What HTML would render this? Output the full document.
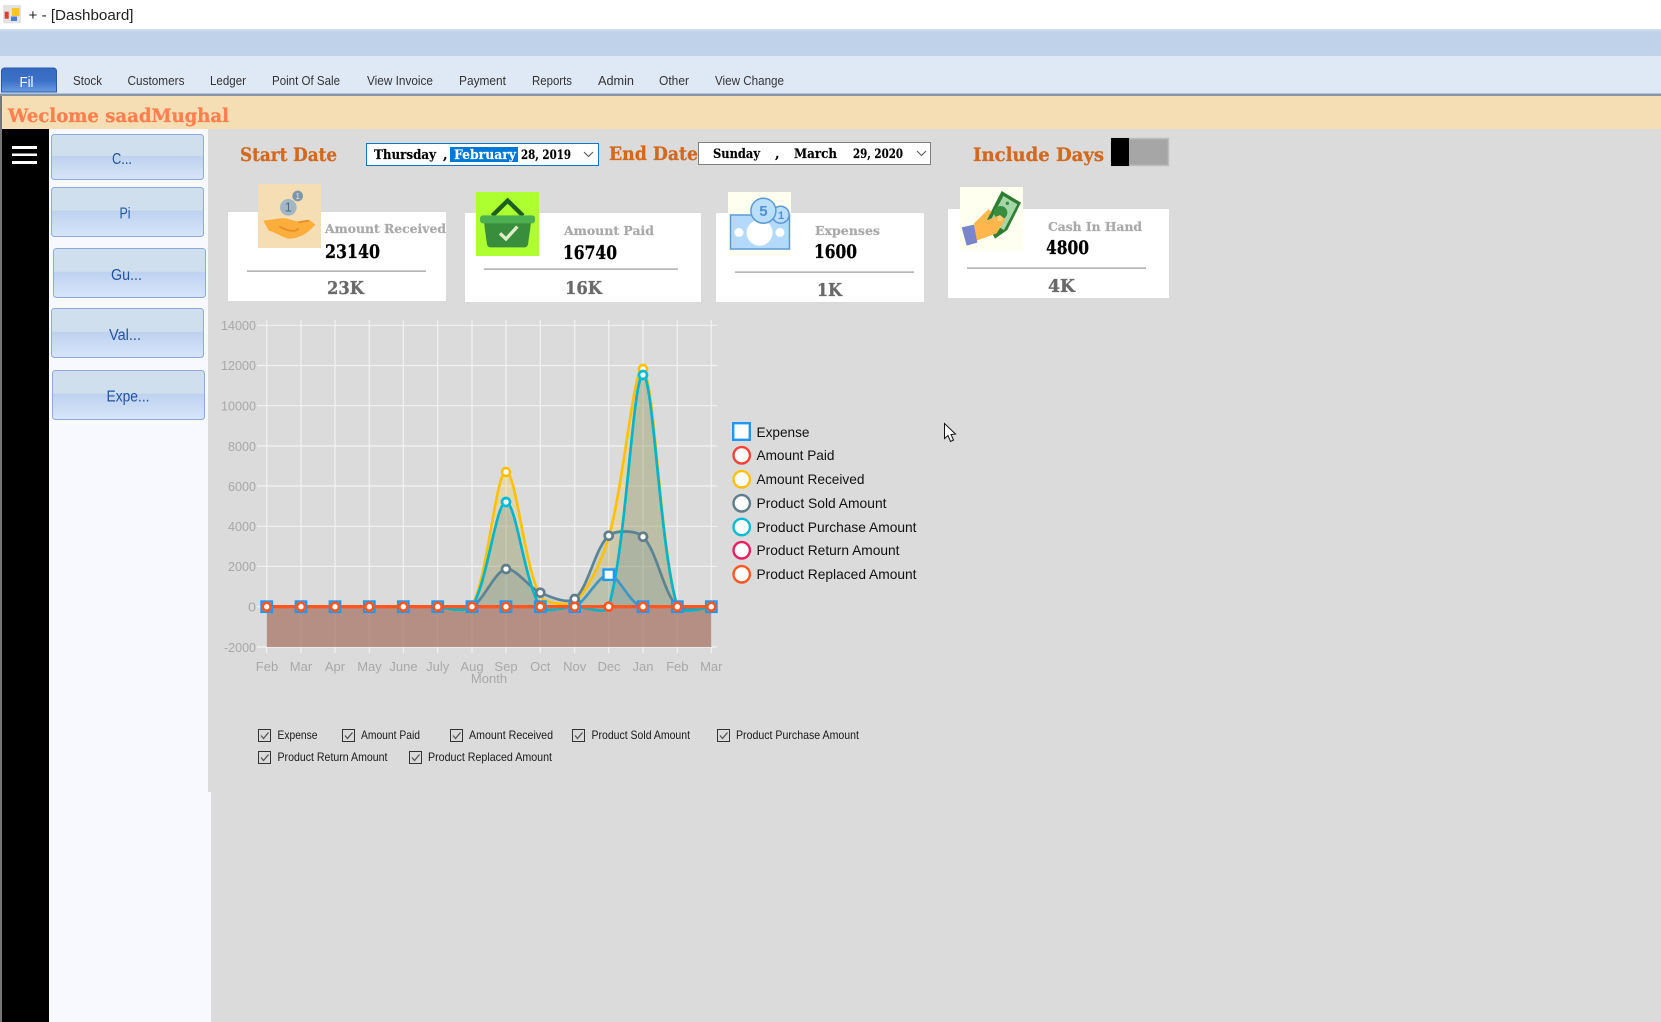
<!DOCTYPE html>
<html lang="en"><head><meta charset="utf-8"><title>Dashboard</title>
<style>
html,body{margin:0;padding:0;width:1661px;height:1022px;overflow:hidden;background:#dbdbdb}
svg{display:block}
text{font-family:"Liberation Sans",Arial,sans-serif;white-space:pre}
.slab{font-family:"DejaVu Serif","Liberation Serif",serif;font-weight:700}
.h{font-size:19px;fill:#d2691e;stroke:#d2691e;stroke-width:.3}
.p{font-size:13px;fill:#000;stroke:#000;stroke-width:.15}
.lab{font-size:12.5px;fill:#a9a9a9;stroke:#a9a9a9;stroke-width:.2}
.num{font-size:19px;fill:#000;stroke:#000;stroke-width:.3}
.k{font-size:17.5px;fill:#696969;stroke:#696969;stroke-width:.3}
.m{font-size:13px;fill:#333}
.b{font-size:15.5px;fill:#22539f}
.ax{font-size:13.3px;fill:#a8a8a8}
.mo{font-size:13px;fill:#a8a8a8;text-anchor:middle}
.lg{font-size:14px;fill:#111}
.cb{font-size:12px;fill:#1a1a1a}
.g line{stroke:#f2f2f2;stroke-width:1.2}
.sq rect{fill:#fff;stroke:#2196f3;stroke-width:2.4}
.oc circle{fill:#fff;stroke:#ff5722;stroke-width:2.7}
.gc circle{fill:#fff;stroke:#607d8b;stroke-width:2.7}
.box rect{fill:none;stroke:#333;stroke-width:1}
.box path{fill:none;stroke:#555;stroke-width:1.3}
</style></head><body>
<svg xmlns="http://www.w3.org/2000/svg" width="1661" height="1022" viewBox="0 0 1661 1022">
<defs>
<linearGradient id="btn" x1="0" y1="0" x2="0" y2="1">
<stop offset="0" stop-color="#cfdfee"/><stop offset=".47" stop-color="#cfdfee"/><stop offset=".48" stop-color="#bdd2f0"/><stop offset="1" stop-color="#d7e5f9"/></linearGradient>
<linearGradient id="fil" x1="0" y1="0" x2="0" y2="1">
<stop offset="0" stop-color="#3569bf"/><stop offset=".55" stop-color="#3c72c8"/><stop offset="1" stop-color="#6a9ce0"/></linearGradient>
<linearGradient id="band" x1="0" y1="0" x2="0" y2="1">
<stop offset="0" stop-color="#d3e0f1"/><stop offset=".12" stop-color="#bfd2ea"/><stop offset="1" stop-color="#c1d3ea"/></linearGradient>
</defs>

<!-- window chrome -->
<rect width="1661" height="29" fill="#fff"/>
<rect x="3" y="5" width="18" height="18" fill="#e2e2e2"/>
<rect x="12" y="8" width="7.500" height="8" fill="#f6c42c"/>
<rect x="4.700" y="11.700" width="4" height="7" fill="#d8402f"/>
<rect x="11" y="16.500" width="6" height="4.500" fill="#4d7fd0"/>
<text x="28.500" y="20" font-size="14.500" fill="#222" textLength="105" lengthAdjust="spacingAndGlyphs">+ - [Dashboard]</text>
<rect y="29" width="1661" height="27" fill="url(#band)"/>
<rect y="56" width="1661" height="38" fill="#dfe9f6"/>
<rect y="93" width="1661" height="1" fill="#b5c3d3"/>
<rect y="94" width="1661" height="2" fill="#8496a8"/>

<!-- ribbon tabs -->
<path d="M1.500 92V71a3 3 0 0 1 3-3h49a3 3 0 0 1 3 3v21z" fill="url(#fil)" stroke="#2a5cab"/>
<text x="19.500" y="87" font-size="15" fill="#fff" textLength="14" lengthAdjust="spacingAndGlyphs">Fil</text>
<text class="m" x="73" y="85" textLength="29" lengthAdjust="spacingAndGlyphs">Stock</text>
<text class="m" x="127.500" y="85" textLength="57" lengthAdjust="spacingAndGlyphs">Customers</text>
<text class="m" x="210" y="85" textLength="36" lengthAdjust="spacingAndGlyphs">Ledger</text>
<text class="m" x="272" y="85" textLength="68" lengthAdjust="spacingAndGlyphs">Point Of Sale</text>
<text class="m" x="367" y="85" textLength="66" lengthAdjust="spacingAndGlyphs">View Invoice</text>
<text class="m" x="459" y="85" textLength="47" lengthAdjust="spacingAndGlyphs">Payment</text>
<text class="m" x="532" y="85" textLength="40" lengthAdjust="spacingAndGlyphs">Reports</text>
<text class="m" x="598" y="85" textLength="36" lengthAdjust="spacingAndGlyphs">Admin</text>
<text class="m" x="659" y="85" textLength="30" lengthAdjust="spacingAndGlyphs">Other</text>
<text class="m" x="715" y="85" textLength="69" lengthAdjust="spacingAndGlyphs">View Change</text>

<!-- welcome bar -->
<rect y="96" width="1661" height="33" fill="#f5deb3"/>
<rect y="96" width="2" height="926" fill="#777"/>
<text class="slab" x="8" y="122" font-size="19" fill="#ff7f50" stroke="#ff7f50" stroke-width=".3" textLength="221" lengthAdjust="spacingAndGlyphs">Weclome saadMughal</text>

<!-- side -->
<rect x="2" y="129" width="47" height="893" fill="#000"/>
<rect x="49" y="129" width="159" height="663" fill="#f8f9fe"/>
<rect x="49" y="792" width="162" height="230" fill="#f8f9fe"/>
<rect x="12" y="146" width="25" height="3" fill="#fff"/>
<rect x="12" y="153.500" width="25" height="2.500" fill="#fff"/>
<rect x="12" y="161" width="25" height="3" fill="#fff"/>

<g fill="url(#btn)" stroke="#8dabd9">
<rect x="51.500" y="134.500" width="152" height="45" rx="3"/>
<rect x="51.500" y="187.500" width="152" height="49" rx="3"/>
<rect x="53.500" y="248.500" width="152" height="49" rx="3"/>
<rect x="51.500" y="308.500" width="152" height="49" rx="3"/>
<rect x="52.500" y="370.500" width="152" height="49" rx="3"/>
</g>
<text class="b" x="112" y="164" textLength="20" lengthAdjust="spacingAndGlyphs">C...</text>
<text class="b" x="119.500" y="218.500" textLength="11" lengthAdjust="spacingAndGlyphs">Pi</text>
<text class="b" x="111" y="280" textLength="31" lengthAdjust="spacingAndGlyphs">Gu...</text>
<text class="b" x="109" y="340" textLength="32" lengthAdjust="spacingAndGlyphs">Val...</text>
<text class="b" x="106.500" y="401.500" textLength="43" lengthAdjust="spacingAndGlyphs">Expe...</text>

<!-- date header -->
<text class="slab h" x="240" y="161" textLength="97" lengthAdjust="spacingAndGlyphs">Start Date</text>
<rect x="366.500" y="143.500" width="232" height="22" fill="#fff" stroke="#0a78d4"/>
<rect x="450" y="147" width="68" height="15" fill="#0078d7"/>
<text class="slab p" x="374" y="159" textLength="62" lengthAdjust="spacingAndGlyphs">Thursday</text>
<text class="slab p" x="443" y="159">,</text>
<text class="slab p" x="454" y="159" style="fill:#fff;stroke:#fff" textLength="62" lengthAdjust="spacingAndGlyphs">February</text>
<text class="slab p" x="521" y="159" textLength="50" lengthAdjust="spacingAndGlyphs">28, 2019</text>
<path d="M584 152l4.500 4.500 4.500-4.500" fill="none" stroke="#555"/>

<text class="slab h" x="609" y="160" textLength="89" lengthAdjust="spacingAndGlyphs">End Date</text>
<rect x="698.500" y="142.500" width="232" height="22" fill="#fff" stroke="#7f7f7f"/>
<text class="slab p" x="713" y="158" textLength="47" lengthAdjust="spacingAndGlyphs">Sunday</text>
<text class="slab p" x="775" y="158">,</text>
<text class="slab p" x="794" y="158" textLength="43" lengthAdjust="spacingAndGlyphs">March</text>
<text class="slab p" x="853" y="158" textLength="50" lengthAdjust="spacingAndGlyphs">29, 2020</text>
<path d="M917 151l4.500 4.500 4.500-4.500" fill="none" stroke="#555"/>

<text class="slab h" x="973" y="161" textLength="131" lengthAdjust="spacingAndGlyphs">Include Days</text>
<rect x="1111.500" y="138.500" width="57" height="27" fill="#a6a6a6" stroke="#bdbdbd" stroke-width="1.500"/>
<rect x="1111" y="138" width="18" height="28" fill="#000"/>

<!-- card 1 -->
<rect x="228" y="212" width="218" height="89" fill="#fff"/>
<rect x="258" y="184" width="63" height="64" fill="#f5deb3"/>
<g transform="translate(230 180) scale(.33333)">
<circle cx="175" cy="82" r="25" fill="#a3b6c6"/>
<circle cx="203" cy="48" r="16" fill="#7d97a9"/>
<text x="175" y="95" font-size="38" fill="#4f6b7e" text-anchor="middle">1</text>
<text x="203" y="57" font-size="24" fill="#dfe6ea" text-anchor="middle">1</text>
<path d="M100 122L150 115C172 112 190 124 205 124L238 120L256 134C240 152 218 174 180 176C160 176 140 158 116 152Z" fill="#fbae3c"/>
<path d="M148 139C170 152 195 158 206 146M205 127L236 122" fill="none" stroke="#e8902a" stroke-width="6"/>
</g>
<text class="slab lab" x="325" y="233" textLength="121" lengthAdjust="spacingAndGlyphs">Amount Received</text>
<text class="slab num" x="325" y="258" textLength="55" lengthAdjust="spacingAndGlyphs">23140</text>
<rect x="247" y="270.500" width="179" height="1.200" fill="#999"/>
<text class="slab k" x="327" y="294" textLength="37" lengthAdjust="spacingAndGlyphs">23K</text>

<!-- card 2 -->
<rect x="465" y="213" width="236" height="89" fill="#fff"/>
<rect x="476" y="192" width="63" height="64" fill="#adff2f"/>
<g transform="translate(460 180) scale(.33333)">
<path d="M97 107L143 62L189 107" fill="none" stroke="#1b5e20" stroke-width="13"/>
<path d="M72 128H213L204 193Q202 202 192 202H93Q83 202 81 193Z" fill="#388e3c"/>
<rect x="60" y="106" width="165" height="24" rx="9" fill="#4caf50"/>
<path d="M120 160L138 177L172 140" fill="none" stroke="#dcedc8" stroke-width="10"/>
</g>
<text class="slab lab" x="564" y="235" textLength="90" lengthAdjust="spacingAndGlyphs">Amount Paid</text>
<text class="slab num" x="563" y="259" textLength="54" lengthAdjust="spacingAndGlyphs">16740</text>
<rect x="484" y="268.500" width="194" height="1.200" fill="#999"/>
<text class="slab k" x="565" y="294" textLength="37" lengthAdjust="spacingAndGlyphs">16K</text>

<!-- card 3 -->
<rect x="716" y="213" width="208" height="89" fill="#fff"/>
<rect x="728" y="192" width="63" height="64" fill="#fffff0"/>
<rect x="730.500" y="215" width="59" height="34" fill="#b3d9fb" stroke="#5b9bd5" stroke-width="1.500"/>
<ellipse cx="759.600" cy="232.700" rx="13" ry="13" fill="#fff"/>
<circle cx="739" cy="232.500" r="4.500" fill="#fff"/>
<circle cx="780" cy="232.500" r="4.500" fill="#fff"/>
<circle cx="780.600" cy="214.700" r="8.500" fill="#bbdefb" stroke="#5b9bd5" stroke-width="1.500"/>
<circle cx="763.400" cy="210.700" r="12.500" fill="#bbdefb" stroke="#5b9bd5" stroke-width="1.500"/>
<text x="763.400" y="216" font-size="15" font-weight="700" fill="#4f8fd0" text-anchor="middle">5</text>
<text x="781" y="219" font-size="11" font-weight="700" fill="#4f8fd0" text-anchor="middle">1</text>
<text class="slab lab" x="815" y="235" textLength="65" lengthAdjust="spacingAndGlyphs">Expenses</text>
<text class="slab num" x="814" y="258" textLength="43" lengthAdjust="spacingAndGlyphs">1600</text>
<rect x="735" y="271.500" width="179" height="1.200" fill="#999"/>
<text class="slab k" x="817" y="296" textLength="25" lengthAdjust="spacingAndGlyphs">1K</text>

<!-- card 4 -->
<rect x="948" y="209" width="221" height="89" fill="#fff"/>
<rect x="960" y="187" width="63" height="64" fill="#fffff0"/>
<g transform="translate(950 180) scale(.33333)">
<path d="M155 33L213 68L172 150L135 176L108 125Z" fill="#2e7d32"/>
<path d="M160 48L202 73L162 150L120 125Z" fill="#a5d6a7"/>
<circle cx="152" cy="98" r="20" fill="#388e3c"/>
<circle cx="172" cy="70" r="5" fill="#388e3c"/>
<path d="M72 130L115 88L125 95L108 122L150 105L166 118L140 160L80 182Z" fill="#ffb74d"/>
<circle cx="150" cy="116" r="8" fill="#ffcc80"/>
<path d="M35 142L72 134L82 188L50 197Z" fill="#7986cb"/>
</g>
<text class="slab lab" x="1048" y="231" textLength="94" lengthAdjust="spacingAndGlyphs">Cash In Hand</text>
<text class="slab num" x="1046" y="254" textLength="43" lengthAdjust="spacingAndGlyphs">4800</text>
<rect x="967" y="267.500" width="179" height="1.200" fill="#999"/>
<text class="slab k" x="1048" y="292" textLength="27" lengthAdjust="spacingAndGlyphs">4K</text>

<!-- chart grid -->
<g class="g">
<line x1="257" x2="717" y1="325.300" y2="325.300"/><line x1="257" x2="717" y1="365.500" y2="365.500"/><line x1="257" x2="717" y1="405.700" y2="405.700"/><line x1="257" x2="717" y1="446" y2="446"/><line x1="257" x2="717" y1="486" y2="486"/><line x1="257" x2="717" y1="526.300" y2="526.300"/><line x1="257" x2="717" y1="566.400" y2="566.400"/><line x1="257" x2="717" y1="606.700" y2="606.700"/><line x1="257" x2="717" y1="647" y2="647"/>
<line y1="320" y2="653" x1="266.700" x2="266.700"/><line y1="320" y2="653" x1="301" x2="301"/><line y1="320" y2="653" x1="335" x2="335"/><line y1="320" y2="653" x1="369.300" x2="369.300"/><line y1="320" y2="653" x1="403.300" x2="403.300"/><line y1="320" y2="653" x1="437.700" x2="437.700"/><line y1="320" y2="653" x1="472" x2="472"/><line y1="320" y2="653" x1="506" x2="506"/><line y1="320" y2="653" x1="540.300" x2="540.300"/><line y1="320" y2="653" x1="574.700" x2="574.700"/><line y1="320" y2="653" x1="608.700" x2="608.700"/><line y1="320" y2="653" x1="643" x2="643"/><line y1="320" y2="653" x1="677.300" x2="677.300"/><line y1="320" y2="653" x1="711.300" x2="711.300"/>
</g>
<g class="ax">
<text x="221" y="330" textLength="35" lengthAdjust="spacingAndGlyphs">14000</text>
<text x="221" y="370" textLength="35" lengthAdjust="spacingAndGlyphs">12000</text>
<text x="221" y="410.500" textLength="35" lengthAdjust="spacingAndGlyphs">10000</text>
<text x="228" y="451" textLength="28" lengthAdjust="spacingAndGlyphs">8000</text>
<text x="228" y="491" textLength="28" lengthAdjust="spacingAndGlyphs">6000</text>
<text x="228" y="531" textLength="28" lengthAdjust="spacingAndGlyphs">4000</text>
<text x="228" y="571" textLength="28" lengthAdjust="spacingAndGlyphs">2000</text>
<text x="248" y="611.500" textLength="8" lengthAdjust="spacingAndGlyphs">0</text>
<text x="224" y="652" textLength="32" lengthAdjust="spacingAndGlyphs">-2000</text>
</g>
<g class="mo">
<text x="267" y="671">Feb</text><text x="301" y="671">Mar</text><text x="335" y="671">Apr</text><text x="369.500" y="671">May</text><text x="403.500" y="671">June</text><text x="437.700" y="671">July</text><text x="472" y="671">Aug</text><text x="506" y="671">Sep</text><text x="540.300" y="671">Oct</text><text x="574.700" y="671">Nov</text><text x="609" y="671">Dec</text><text x="643" y="671">Jan</text><text x="677.300" y="671">Feb</text><text x="711.300" y="671">Mar</text>
<text x="489" y="683">Month</text>
</g>

<!-- area fills -->
<path fill="#2196f3" fill-opacity=".15" d="M266.700 647V606.700H574.700C586.500 601.200 598.500 574.700 608.700 574.700C618.900 574.700 631.100 606.700 643 606.700H711.300V647Z"/>
<path fill="#f44336" fill-opacity=".15" d="M266.700 647V606.700H711.300V647Z"/>
<path fill="#ffc107" fill-opacity=".2" d="M266.700 647V606.700H437.700C437.700 606.700 467.900 614.700 472 606.700C488.400 574.300 495.500 473 506 472C516 471 524 566 540.300 596C545 604 568 606 574.700 602C588.600 590 602.700 558 608.700 537C623.200 488 634.400 360.600 643 369C654.900 380.600 659.400 544.200 677.300 606.700C679.800 615.500 711.300 606.700 711.300 606.700V647Z"/>
<path fill="#66898f" fill-opacity=".3" d="M266.700 647V606.700H437.700C437.700 606.700 467.100 614.200 472 606.700C487.600 582.800 495.800 502 506 502C516.200 502 524.600 582.800 540.300 606.700C545.200 614.200 564.400 606.700 574.700 606.700C585 606.700 606.100 615.500 608.700 606.700C626.600 546 632.700 375 643 375C653.300 375 659.400 546 677.300 606.700C679.900 615.500 711.300 606.700 711.300 606.700V647Z"/>
<path fill="#607d8b" fill-opacity=".15" d="M266.700 647V606.700H437.700C437.700 606.700 463.700 611.300 472 606.700C484.200 599.900 494.700 571.300 506 569C515.200 567.100 529.100 587.800 540.300 592.700C549.700 596.800 568 604.600 574.700 599C588.500 587.500 594.800 548.300 608.700 535.700C615.300 529.700 636.700 530.200 643 536.700C657.300 551.500 663 592 677.300 606.700C683.500 613 711.300 606.700 711.300 606.700V647Z"/>
<path fill="#e91e63" fill-opacity=".1" d="M266.700 647V606.700H711.300V647Z"/>
<path fill="#ff5722" fill-opacity=".12" d="M266.700 647V606.700H711.300V647Z"/>

<!-- lines -->
<g fill="none" stroke-width="2.700">
<path stroke="#ffc107" d="M437.700 606.700C437.700 606.700 467.900 614.700 472 606.700C488.400 574.300 495.500 473 506 472C516 471 524 566 540.300 596C545 604 568 606 574.700 602C588.600 590 602.700 558 608.700 537C623.200 488 634.400 360.600 643 369C654.900 380.600 659.400 544.200 677.300 606.700C679.800 615.500 711.300 606.700 711.300 606.700"/>
<path stroke="#3f97c4" d="M266.700 606.700H574.700C586.500 601.200 598.500 574.700 608.700 574.700C618.900 574.700 631.100 606.700 643 606.700H711.300"/>
<path stroke="#5a8496" d="M437.700 606.700C437.700 606.700 463.700 611.300 472 606.700C484.200 599.900 494.700 571.300 506 569C515.200 567.100 529.100 587.800 540.300 592.700C549.700 596.800 568 604.600 574.700 599C588.500 587.500 594.800 548.300 608.700 535.700C615.300 529.700 636.700 530.200 643 536.700C657.300 551.500 663 592 677.300 606.700C683.500 613 711.300 606.700 711.300 606.700"/>
<path stroke="#00b5cc" d="M437.700 606.700C437.700 606.700 467.100 614.200 472 606.700C487.600 582.800 495.800 502 506 502C516.200 502 524.600 582.800 540.300 606.700C545.200 614.200 564.400 606.700 574.700 606.700C585 606.700 606.100 615.500 608.700 606.700C626.600 546 632.700 375 643 375C653.300 375 659.400 546 677.300 606.700C679.900 615.500 711.300 606.700 711.300 606.700"/>
<path stroke="#ff5722" stroke-width="3.400" d="M266.700 606.700H711.300"/>
</g>

<!-- markers -->
<g class="sq">
<rect x="261.500" y="601.500" width="10.400" height="10.400"/><rect x="295.800" y="601.500" width="10.400" height="10.400"/><rect x="329.800" y="601.500" width="10.400" height="10.400"/><rect x="364.100" y="601.500" width="10.400" height="10.400"/><rect x="398.100" y="601.500" width="10.400" height="10.400"/><rect x="432.500" y="601.500" width="10.400" height="10.400"/><rect x="466.800" y="601.500" width="10.400" height="10.400"/><rect x="500.800" y="601.500" width="10.400" height="10.400"/><rect x="535.100" y="601.500" width="10.400" height="10.400"/><rect x="569.500" y="601.500" width="10.400" height="10.400"/><rect x="603.500" y="569.500" width="10.400" height="10.400"/><rect x="637.800" y="601.500" width="10.400" height="10.400"/><rect x="672.100" y="601.500" width="10.400" height="10.400"/><rect x="706.100" y="601.500" width="10.400" height="10.400"/>
</g>
<circle cx="506" cy="472" r="4" fill="#fff" stroke="#ffc107" stroke-width="2.700"/>
<circle cx="643" cy="369" r="4" fill="#fff" stroke="#ffc107" stroke-width="2.700"/>
<g class="gc">
<circle cx="506" cy="569" r="4"/><circle cx="540.300" cy="592.700" r="4"/><circle cx="574.700" cy="599" r="4"/><circle cx="608.700" cy="535.700" r="4"/><circle cx="643" cy="536.700" r="4"/>
</g>
<circle cx="506" cy="502" r="4" fill="#fff" stroke="#00bcd4" stroke-width="2.700"/>
<circle cx="643" cy="375" r="4" fill="#fff" stroke="#00bcd4" stroke-width="2.700"/>
<g class="oc">
<circle cx="266.700" cy="606.700" r="4"/><circle cx="301" cy="606.700" r="4"/><circle cx="335" cy="606.700" r="4"/><circle cx="369.300" cy="606.700" r="4"/><circle cx="403.300" cy="606.700" r="4"/><circle cx="437.700" cy="606.700" r="4"/><circle cx="472" cy="606.700" r="4"/><circle cx="506" cy="606.700" r="4"/><circle cx="540.300" cy="606.700" r="4"/><circle cx="574.700" cy="606.700" r="4"/><circle cx="608.700" cy="606.700" r="4"/><circle cx="643" cy="606.700" r="4"/><circle cx="677.300" cy="606.700" r="4"/><circle cx="711.300" cy="606.700" r="4"/>
</g>

<!-- legend -->
<rect x="733.200" y="423.200" width="16.600" height="16.600" fill="#fff" stroke="#2196f3" stroke-width="2.400"/>
<g fill="#fff" stroke-width="2.400">
<circle cx="741.700" cy="455.300" r="8.200" stroke="#f44336"/>
<circle cx="741.700" cy="479.300" r="8.200" stroke="#ffc107"/>
<circle cx="741.700" cy="503.300" r="8.200" stroke="#607d8b"/>
<circle cx="741.700" cy="527" r="8.200" stroke="#00bcd4"/>
<circle cx="741.700" cy="550.300" r="8.200" stroke="#e91e63"/>
<circle cx="741.700" cy="574.300" r="8.200" stroke="#ff5722"/>
</g>
<g class="lg">
<text x="756.500" y="437" textLength="53" lengthAdjust="spacingAndGlyphs">Expense</text>
<text x="756.500" y="460" textLength="78" lengthAdjust="spacingAndGlyphs">Amount Paid</text>
<text x="756.500" y="484" textLength="108" lengthAdjust="spacingAndGlyphs">Amount Received</text>
<text x="756.500" y="508" textLength="130" lengthAdjust="spacingAndGlyphs">Product Sold Amount</text>
<text x="756.500" y="532" textLength="160" lengthAdjust="spacingAndGlyphs">Product Purchase Amount</text>
<text x="756.500" y="555" textLength="143" lengthAdjust="spacingAndGlyphs">Product Return Amount</text>
<text x="756.500" y="579" textLength="160" lengthAdjust="spacingAndGlyphs">Product Replaced Amount</text>
</g>

<!-- cursor -->
<path d="M944.500 423.500V438.500L948 435.500L950.500 441.500L953.500 440L951 434.500L955.500 434Z" fill="#fff" stroke="#111" stroke-width="1"/>

<!-- checkboxes -->
<g class="box">
<rect x="258.500" y="729.500" width="12" height="12"/><path d="M261 735.500l2.500 3 5-6"/>
<rect x="342.500" y="729.500" width="12" height="12"/><path d="M345 735.500l2.500 3 5-6"/>
<rect x="450.500" y="729.500" width="12" height="12"/><path d="M453 735.500l2.500 3 5-6"/>
<rect x="572.500" y="729.500" width="12" height="12"/><path d="M575 735.500l2.500 3 5-6"/>
<rect x="717.500" y="729.500" width="12" height="12"/><path d="M720 735.500l2.500 3 5-6"/>
<rect x="258.500" y="751.500" width="12" height="12"/><path d="M261 757.500l2.500 3 5-6"/>
<rect x="409.500" y="751.500" width="12" height="12"/><path d="M412 757.500l2.500 3 5-6"/>
</g>
<g class="cb">
<text x="277.500" y="739" textLength="40" lengthAdjust="spacingAndGlyphs">Expense</text>
<text x="361" y="739" textLength="59" lengthAdjust="spacingAndGlyphs">Amount Paid</text>
<text x="469" y="739" textLength="84" lengthAdjust="spacingAndGlyphs">Amount Received</text>
<text x="591.500" y="739" textLength="98.500" lengthAdjust="spacingAndGlyphs">Product Sold Amount</text>
<text x="736" y="739" textLength="123" lengthAdjust="spacingAndGlyphs">Product Purchase Amount</text>
<text x="277.500" y="761" textLength="110" lengthAdjust="spacingAndGlyphs">Product Return Amount</text>
<text x="428" y="761" textLength="124" lengthAdjust="spacingAndGlyphs">Product Replaced Amount</text>
</g>
</svg>
</body></html>
